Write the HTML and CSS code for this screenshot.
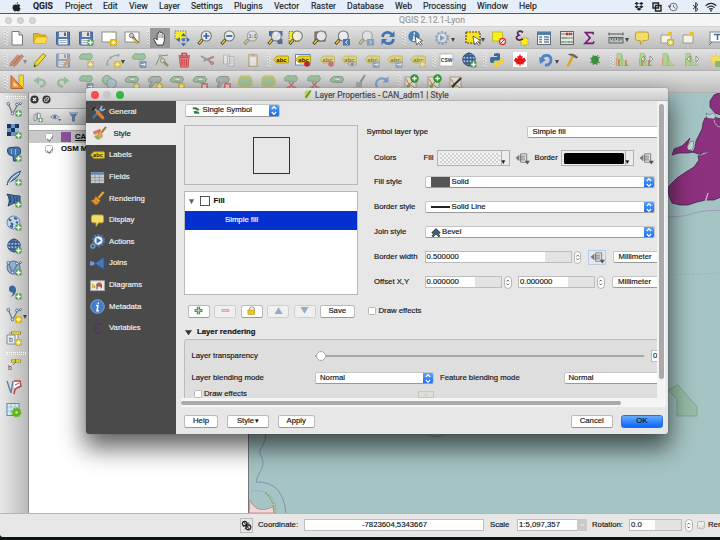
FILE: index.html
```html
<!DOCTYPE html>
<html lang="en">
<head>
<meta charset="utf-8">
<title>QGIS 2.12.1-Lyon</title>
<link rel="stylesheet" href="styles.css">
</head>
<body>
<svg class="defs" width="0" height="0">
  <symbol id="arr" viewBox="0 0 6 16"><path d="M1 8h4L3 12z" fill="#444"/></symbol>
  <symbol id="sep" viewBox="0 0 4 16"><path d="M1 1v15M3 2v14" stroke="#fff" stroke-dasharray="1 2"/><path d="M1.5 2v14" stroke="#999" stroke-width=".6" stroke-dasharray="1 2"/></symbol>
  <symbol id="star" viewBox="0 0 16 16"><rect x="9" y="9" width="7" height="7" rx="1.3" fill="#d9b414"/><path d="M12.5 10v5M10 12.5h5M10.8 10.8l3.4 3.4M14.2 10.8l-3.4 3.4" stroke="#fff9b0" stroke-width=".9"/></symbol>
  <symbol id="plus" viewBox="0 0 16 16"><rect x="9.5" y="9.5" width="6" height="6" rx="1" fill="#4f9a4c"/><path d="M12.5 10.3v4.4M10.3 12.5h4.4" stroke="#fff" stroke-width="1.5"/></symbol>
  <symbol id="blueb" viewBox="0 0 16 16"><rect x="8.5" y="9" width="7" height="7" rx="1" fill="#5b82b4"/><path d="M10 12.5h4M12.5 10.8l1.8 1.7-1.8 1.7" stroke="#fff" fill="none"/></symbol>
  <symbol id="redx" viewBox="0 0 16 16"><rect x="9" y="9" width="7" height="7" rx="1" fill="#db5a58"/><path d="M10.8 10.8l3.4 3.4M14.2 10.8l-3.4 3.4" stroke="#fff" stroke-width="1.2"/></symbol>
  <symbol id="new" viewBox="0 0 16 16"><path d="M3 1.5h7l3.5 3.5v10H3z" fill="#fff" stroke="#777"/><path d="M10 1.5V5h3.5" fill="#ddd" stroke="#777"/></symbol>
  <symbol id="open" viewBox="0 0 16 16"><path d="M1.5 13.500V3.500h5l1 1.500h6v2" fill="#e5b51d" stroke="#c79715"/><path d="M1.500 13.500L4 7h11.500l-2 6.500z" fill="#ffdc45" stroke="#d3a51b" stroke-width=".7"/></symbol>
  <symbol id="save" viewBox="0 0 16 16"><path d="M1.500 2h13v13h-12l-1-1z" fill="#5378b4" stroke="#45648f"/><rect x="4" y="2" width="8" height="5" fill="#e0e0e0"/><rect x="9" y="2.500" width="2" height="3.500" fill="#667"/><rect x="3.500" y="9" width="9" height="5.500" fill="#f2f2f2"/><path d="M4.500 10.500h7M4.500 12.500h7" stroke="#8b93a0" stroke-width=".7"/></symbol>
  <symbol id="pagew" viewBox="0 0 16 16"><rect x="1" y="2" width="14" height="10" fill="#fff" stroke="#777" stroke-width=".8"/></symbol>
  <symbol id="wrench" viewBox="0 0 16 16"><path d="M8 6l6 7.500" stroke="#555" stroke-width="2.600"/><path d="M9 8l5 6" stroke="#e8c62c" stroke-width="1.500"/><circle cx="7.500" cy="5.500" r="2.200" fill="#ccc" stroke="#555" stroke-width=".7"/></symbol>
  <symbol id="hand" viewBox="0 0 16 16"><path d="M5 15L2 9.500q-.3-1.700 1.600-1l1.600 1.600V3.500q.8-1.500 1.700 0V2q1-1.500 1.900 0v1q1-1.400 1.800.2v1q1-1 1.700.4v6L11 15z" fill="#fff" stroke="#222" stroke-width=".8"/><path d="M7 4v4M9 4v4M10.700 5v3" stroke="#444" stroke-width=".6"/></symbol>
  <symbol id="panz" viewBox="0 0 16 16"><path d="M1 1h11v8H1z" fill="#f7ec20" stroke="#555" stroke-width=".7" stroke-dasharray="1.500 1"/><path d="M9.500 3l2.500 3.300H7zM9.500 16.500L7 13.200h5zM2.500 9.700l3.300-2.500v5zM16 9.700l-3.300-2.500v5z" fill="#3767a8"/><path d="M8 8.300h3v3H8z" fill="#4e79b5"/></symbol>
  <symbol id="mag" viewBox="0 0 16 16"><path d="M5.500 9.500L1.500 14" stroke="#333" stroke-width="3"/><path d="M5 10L2 13.500" stroke="#edc82b" stroke-width="1.700"/><circle cx="9.300" cy="6" r="5" fill="#edf1f3" fill-opacity=".85" stroke="#777" stroke-width="1.100"/></symbol>
  <symbol id="full" viewBox="0 0 16 16"><path d="M2 1h5v5H2zM15.500 1h-5v5h5zM15.500 14h-5V9h5z" fill="#446fa5"/><path d="M3 3l10 10M13 3L8 8" stroke="#446fa5" stroke-width="2"/></symbol>
  <symbol id="ysq" viewBox="0 0 16 16"><rect x="1" y="1.500" width="10" height="10" fill="#f9ef1a" stroke="#665f2a" stroke-width=".8" stroke-dasharray="1.500 1"/></symbol>
  <symbol id="ysel" viewBox="0 0 16 16"><rect x="1" y="2" width="14" height="11" fill="#f9e31a" stroke="#333" stroke-width="1.200" stroke-dasharray="1.800 1.200"/></symbol>
  <symbol id="gsq" viewBox="0 0 16 16"><rect x="3" y="2" width="10" height="9" fill="#a79fb7" stroke="#555"/></symbol>
  <symbol id="refresh" viewBox="0 0 16 16"><path d="M2.500 7C3 2 9 1 12 4.500M13.500 9C13 14 7 15 4 11.500" fill="none" stroke="#3f72b5" stroke-width="2.600"/><path d="M14.500 1v6H9zM1.500 15V9H7z" fill="#3f72b5"/></symbol>
  <symbol id="cursor" viewBox="0 0 16 16"><path d="M8 6l1.500 9 2-2.500 2.500 3 1.200-1.200-2.500-2.700 2.800-1z" fill="#fff" stroke="#333" stroke-width=".7"/></symbol>
  <symbol id="info" viewBox="0 0 16 16"><circle cx="7" cy="6.500" r="5.700" fill="#477eb8"/><path d="M7.300 2.500v1.800M7 5.500v4.700M5.500 10.200h3" stroke="#fff" stroke-width="1.500"/></symbol>
  <symbol id="gear" viewBox="0 0 16 16"><circle cx="8" cy="8" r="5.900" fill="none" stroke="#5379ab" stroke-width="2.200" stroke-dasharray="2.300 1.400"/><circle cx="8" cy="8" r="4.900" fill="#eaf0f7" stroke="#5379ab"/><path d="M6 5l5 3-5 3z" fill="#3c6dae"/></symbol>
  <symbol id="eps" viewBox="0 0 16 16"><path d="M9 2.500C5-.5 1.500 3 5 5.200 0 7 3 12 9 9" fill="none" stroke="#5b2267" stroke-width="1.700"/></symbol>
  <symbol id="ysm" viewBox="0 0 16 16"><rect x="7" y="8" width="7" height="7" fill="#f9ef1a" stroke="#8c841b" stroke-width=".7" stroke-dasharray="1.500 1"/></symbol>
  <symbol id="table" viewBox="0 0 16 16"><rect x="1.500" y="2" width="13" height="12.500" fill="#f5f7f8" stroke="#5d6c7b"/><rect x="1.500" y="2" width="13" height="3" fill="#527caa"/><path d="M3 7h3M3 9.500h3M3 12h3M8 7h5M8 9.500h5M8 12h5" stroke="#6c8496" stroke-width="1.300"/></symbol>
  <symbol id="abacus" viewBox="0 0 16 16"><rect x="1.500" y="1.500" width="13" height="13" fill="#e6e6de" stroke="#666"/><path d="M2 4h12M2 8h12M2 12h12" stroke="#555" stroke-width=".7"/><path d="M7 4h6" stroke="#c32b2b" stroke-width="2.500" stroke-dasharray="2 .6"/><path d="M3 8h5M9 12h5M3 12h3" stroke="#7fae8b" stroke-width="2.200" stroke-dasharray="2 .6"/></symbol>
  <symbol id="sigma" viewBox="0 0 16 16"><path d="M12.500 4.500L12 2.700H4.500L9 8l-5 5.400h8l1-2" fill="none" stroke="#761b79" stroke-width="1.700"/></symbol>
  <symbol id="ruler" viewBox="0 0 16 16"><path d="M1 4h14M1 2.500v3M15 2.500v3" stroke="#555"/><rect x="1" y="7.500" width="14" height="5.500" fill="#b5c2bd" stroke="#5a6561"/><path d="M3.500 8v2M6 8v3M8.500 8v2M11 8v3M13 8v2" stroke="#444" stroke-width=".8"/></symbol>
  <symbol id="tip" viewBox="0 0 16 16"><path d="M3.500 2h9q2 0 2 2v4.500q0 2-2 2H9l-2.500 4-.2-4H3.500q-2 0-2-2V4q0-2 2-2z" fill="#f2dd68" stroke="#b79b32" stroke-width=".9"/></symbol>
  <symbol id="book" viewBox="0 0 16 16"><path d="M3 5h10v8H3z" fill="#f5f2e4" stroke="#918b7a" stroke-width=".8"/><path d="M10 2h4v4h-4z" fill="#e9c528"/></symbol>
  <symbol id="tbox" viewBox="0 0 16 16"><rect x="2" y="2" width="15" height="10" fill="#fff" stroke="#7688a0"/><path d="M1 15l3-3" stroke="#666"/><path d="M6 4.500h7M9.500 4.500V10" stroke="#4b658b" stroke-width="1.500"/></symbol>
  <symbol id="pencil" viewBox="0 0 16 16"><path d="M2 15l1-4.500L11 1.500l3 2.300-8.500 9.500z" fill="#f1d92f" stroke="#857313" stroke-width=".8"/><path d="M2 15l.7-2.600 1.500 1.100z" fill="#333"/></symbol>
  <symbol id="pencils" viewBox="0 0 16 16"><path d="M1 14l1-3.500L8.500 3l2.300 1.500L4 12.500zM4.500 14.500l1-3.500L12 2.500l2.500 1.800-7 8.500z" fill="#cb7247" stroke="#8b5136" stroke-width=".7"/></symbol>
  <symbol id="opencil" viewBox="0 0 16 16"><path d="M8.500 15l.5-3 4.500-6 2 1.500-4.500 6z" fill="#df7433" stroke="#a65c2f" stroke-width=".5"/></symbol>
  <symbol id="blob" viewBox="0 0 16 16"><path d="M2 3.500q2-3 6-1.500l5-.5q3 3 0 6-4 1-7-.5Q-.5 8 2 3.500z" fill="#84bd8b" stroke="#5b9164" stroke-width=".8"/></symbol>
  <symbol id="ring" viewBox="0 0 16 16"><path d="M2 4.500q2-3 6-2l5 .2q3 2.500 0 5.500-4 1-7-.2Q-.5 9 2 4.500z" fill="#8cc491" stroke="#5d8363"/><ellipse cx="8.500" cy="5.300" rx="3" ry="1.500" fill="#e8e8df" stroke="#516f54" stroke-width=".6"/></symbol>
  <symbol id="gblob" viewBox="0 0 16 16"><path d="M2 4.500q2-3 6-2l5 .2q3 2.500 0 5.500-2 1-4-.2L4.500 13q-3 1-2-1.500L5 8Q-.5 9 2 4.500z" fill="#9daa9f" stroke="#717e73"/></symbol>
  <symbol id="yblob" viewBox="0 0 16 16"><path d="M2 5q2-4 6-2.500l4-.5q5 4 2 9-3 2-6 .5-5 1-6-1z" fill="#8fc18c" stroke="#c9bc2c" stroke-width="1.600"/></symbol>
  <symbol id="node" viewBox="0 0 16 16"><path d="M2 13C2 7 6 4 13 3" fill="none" stroke="#6f806f"/><path d="M1 11.500h2.500V14H1zM4.500 4.500H7V7H4.500zM12 2h2.500v2.500H12z" fill="#8da48d"/></symbol>
  <symbol id="ntool" viewBox="0 0 16 16"><path d="M2 13L6 4l8-1M6 4l7 10" fill="none" stroke="#657460"/><path d="M4.500 2.500h3v3h-3z" fill="#889a88"/><path d="M8 8l6 6" stroke="#7a7a55" stroke-width="2.500"/><circle cx="8.500" cy="8.500" r="2.200" fill="#cfd0a8" stroke="#777"/></symbol>
  <symbol id="trash" viewBox="0 0 16 16"><path d="M3.500 5.500h9.500L12 15H4.500z" fill="#e48383" stroke="#c94a4a"/><path d="M2.500 4h11.500M6 3.500V1.500h4.500v2" fill="none" stroke="#c94a4a" stroke-width="1.500"/><path d="M6 7v6.500M8.200 7v6.500M10.500 7v6.500" stroke="#c33f3f"/></symbol>
  <symbol id="cut" viewBox="0 0 16 16"><path d="M2 4l10 6M15 4.500L4.500 9" stroke="#7c7c7c" stroke-width="1.500"/><path d="M11 10q3-1 3.500 1.500-2 2-3.500-1.500M10 7.500q2-3 4.500-1.500" fill="none" stroke="#c45050" stroke-width="1.400"/></symbol>
  <symbol id="copy" viewBox="0 0 16 16"><path d="M2.500 3h6v9h-6zM6.500 4.500h6.500V14H6.500z" fill="#f4f4f4" stroke="#999"/><path d="M8 7h3.500M8 9h3.500M8 11h3.500" stroke="#999" stroke-width=".8"/></symbol>
  <symbol id="paste" viewBox="0 0 16 16"><rect x="3.500" y="2.500" width="9" height="12" fill="#d8b371" stroke="#a88b5b"/><rect x="5" y="5" width="6" height="8.500" fill="#f6f6f6"/><rect x="6" y="1.500" width="4" height="2.500" fill="#888"/></symbol>
  <symbol id="abc" viewBox="0 0 16 16"><path d="M4 4h10.500q1 0 1 1v5q0 1-1 1H4L.7 7.500z" fill="#edd417" stroke="#a4911a" stroke-width=".8"/><text x="3.300" y="9.500" font-family="Liberation Sans" font-weight="bold" font-size="6" fill="#222">abc</text></symbol>
  <symbol id="frame" viewBox="0 0 16 16"><rect x=".5" y="2.500" width="14.500" height="10.500" fill="#fff" stroke="#5a8ac6"/></symbol>
  <symbol id="reddot" viewBox="0 0 16 16"><circle cx="12" cy="12" r="2.800" fill="#c32229"/></symbol>
  <symbol id="eye" viewBox="0 0 16 16"><path d="M7 12q4-4.500 8.500 0-4 4-8.500 0z" fill="#e5e5e5" stroke="#666"/><circle cx="11.200" cy="12" r="1.500" fill="#445"/></symbol>
  <symbol id="csw" viewBox="0 0 16 16"><rect x="2" y="2" width="13" height="12" fill="#fff" stroke="#aaa" stroke-width=".7"/><text x="2.800" y="9.600" font-family="Liberation Sans" font-weight="bold" font-size="5" fill="#333">CSW</text></symbol>
  <symbol id="globe" viewBox="0 0 16 16"><circle cx="8" cy="7.500" r="6.300" fill="#a9bdd5" stroke="#2f5585"/><path d="M8 1v13M2 7.500h12M3 4h10M3 11h10" stroke="#2f5585" stroke-width="1.300"/><ellipse cx="8" cy="7.500" rx="3.300" ry="6.300" fill="none" stroke="#2f5585" stroke-width="1.200"/></symbol>
  <symbol id="python" viewBox="0 0 16 16"><path d="M5 4V2q3-2 6 0v5q0 1.500-2 1.500H6Q4.500 8.500 4.500 11H3Q0 11 1.500 5H8V4z" fill="#386e9e"/><path d="M11 12v2q-3 2-6 0V10.500Q5 9 7 9h3q1.800 0 1.800-3.500H13q3 1 1.700 6H8V12z" fill="#f1cf3e"/></symbol>
  <symbol id="canada" viewBox="0 0 16 16"><rect x="1" y="0" width="14" height="15" fill="#fff"/><path d="M8 2l1.200 2.500 1.500-.8-.4 3L13 5.500v2l1.500.6-3 2.900.2 1.500-3.200-.3V14h-1v-1.800l-3.200.3.200-1.500-3-2.900L3 7.500v-2l2.700 1.200-.4-3 1.500.8z" fill="#e6131b"/></symbol>
  <symbol id="undo2" viewBox="0 0 16 16"><path d="M4 7C5 2 13 2 13 8c0 4-3 5.500-6 5" fill="none" stroke="#4a83cd" stroke-width="2.800"/><path d="M1 5l1 7 6-4z" fill="#4a83cd"/></symbol>
  <symbol id="hammer" viewBox="0 0 16 16"><path d="M9 4L3.500 14.500" stroke="#d9a821" stroke-width="2.600"/><path d="M4.500 2.500q5-2 9.500 3l-2 .5-3-2z" fill="#666" stroke="#444" stroke-width=".5"/></symbol>
  <symbol id="bug" viewBox="0 0 16 16"><path d="M3 6l10 5M3 11l10-6M6 3l4 10M11 3L6 13" stroke="#3f7c3f" stroke-width=".9"/><ellipse cx="8" cy="8" rx="3.800" ry="4.200" fill="#3d9040"/></symbol>
  <symbol id="hist" viewBox="0 0 16 16"><path d="M2 1.500h4.500v12H2zM7 13.500V3q1 8 7 10.500z" fill="#b0d68e" stroke="#93b97a" stroke-width=".6"/><path d="M1.500 6v8" stroke="#db9988"/></symbol>
  <symbol id="redbar" viewBox="0 0 16 16"><path d="M4 7v7M11 8v6" stroke="#d95b4b" stroke-width="1.200"/></symbol>
  <symbol id="larr" viewBox="0 0 16 16"><path d="M3 7l3-3v6zM15 7l-3-3v6z" fill="#eee" stroke="#777" stroke-width=".7"/></symbol>
  <symbol id="sun" viewBox="0 0 16 16"><path d="M8 1v14M1 8h14M3 3l10 10M13 3L3 13" stroke="#e6d153" stroke-width="1.300"/><circle cx="8" cy="8" r="4.200" fill="#f0dc60"/><rect x="7" y="9" width="8" height="6" fill="#8fb56a"/></symbol>
  <symbol id="setsq" viewBox="0 0 16 16"><rect x="10" y="1" width="4.500" height="12" fill="#f1d92f" stroke="#a08c20" stroke-width=".6"/><path d="M2 1.500V14.500H14z" fill="#ee8d35" stroke="#c0601f"/><path d="M4.500 7.500v4.700H9z" fill="#e0e0e0"/></symbol>
  <symbol id="undo" viewBox="0 0 16 16"><path d="M4 6.500q8-2.500 9 2-.5 4-5 4" fill="none" stroke="#63a56b" stroke-width="2.300"/><path d="M1.500 6.500L7 2.500v8z" fill="#63a56b"/></symbol>
  <symbol id="simp" viewBox="0 0 16 16"><circle cx="6" cy="6" r="4.500" fill="#92c598" stroke="#5c8f67"/><path d="M10 4l5 3v5l-5 3-4-3V7z" fill="#a6c4da" fill-opacity=".8" stroke="#6889a2"/></symbol>
  <symbol id="sciss" viewBox="0 0 16 16"><path d="M6 8l5 6M11 8l-5 6" stroke="#c25151" stroke-width="1.300"/><circle cx="5.500" cy="14" r="1.400" fill="none" stroke="#c25151"/><circle cx="11.500" cy="14" r="1.400" fill="none" stroke="#c25151"/></symbol>
  <symbol id="brushg" viewBox="0 0 16 16"><path d="M14 1L9 9" stroke="#777" stroke-width="2"/><path d="M5 8h6v5H5z" fill="#999"/><path d="M2 14.500h10" stroke="#aaa" stroke-width="2"/></symbol>
  <symbol id="rot" viewBox="0 0 16 16"><path d="M3 13C0 8 5 2 12 5.500" fill="none" stroke="#5b8cd2" stroke-width="2"/><path d="M14.500 2v6.500H8.500z" fill="#5b8cd2"/></symbol>
  <symbol id="grass" viewBox="0 0 16 16"><rect x="2" y="3" width="11" height="12" fill="#e9e2d0" stroke="#938571" stroke-width=".7"/><path d="M3 5l3 5 6 4M3 12l4-2 5-5" stroke="#b67960" fill="none"/><path d="M4 13l3-1" stroke="#6a3" stroke-width="2"/></symbol>
  <symbol id="gplus" viewBox="0 0 16 16"><circle cx="11.500" cy="4.500" r="4.200" fill="#2b9d2b"/><path d="M11.500 2.200v4.600M9.200 4.500h4.600" stroke="#fff" stroke-width="1.300"/></symbol>
  <symbol id="vee" viewBox="0 0 16 16"><path d="M2.500 3L6.500 13 12 3" fill="none" stroke="#6a7c8b" stroke-width="1.300"/><path d="M11 3.500h4" stroke="#6a7c8b"/><g fill="#dfe8f0" stroke="#3f5c7d" stroke-width=".8"><circle cx="2.300" cy="2.800" r="1.400"/><circle cx="6.500" cy="12.500" r="1.400"/><circle cx="11" cy="3.500" r="1.400"/><circle cx="14.500" cy="2.500" r="1"/></g></symbol>
  <symbol id="raster" viewBox="0 0 16 16"><rect x="1" y="1" width="12" height="12" fill="#6794c4"/><path d="M1 1h4v4H1zM9 1h4v4H9zM5 5h4v4H5zM1 9h4v4H1z" fill="#19365f"/><path d="M9 5h4v4H9z" fill="#9bb8d6"/></symbol>
  <symbol id="pg" viewBox="0 0 16 16"><path d="M1.500 5Q1 1 6 1.500q8-1.500 8.500 2Q15 9 12 9l-1 1-1 5H7.500L7 10 4 9Q2 9 1.500 5z" fill="#4474a9" stroke="#24466f"/><path d="M5.500 3v5M9.500 3v6" stroke="#a5c0da" stroke-width=".8"/></symbol>
  <symbol id="feather" viewBox="0 0 16 16"><path d="M1 15Q2 6 14.500 1 13 8 4 12z" fill="#6d97c5" stroke="#32577f"/><path d="M2 14Q6 7 13 3" stroke="#e7f0fa" fill="none"/></symbol>
  <symbol id="shell" viewBox="0 0 16 16"><path d="M1 2q8 2 13 2v7q-7-1-12 3 3-6-1-12z" fill="#4474a9" stroke="#1f3f6a"/><path d="M4 4q2 4 0 7M7.500 4q2 4 0 7M11 5v6" stroke="#1f3f6a" fill="none"/></symbol>
  <symbol id="dots" viewBox="0 0 16 16"><circle cx="7.500" cy="7.500" r="6.500" fill="#c6d6e5" stroke="#6687ab"/><path d="M3 4l2 2M8 3l3 1M10 7l2 1M5 8l2 2M4 11l3 1" stroke="#37659b" stroke-width="2.200"/></symbol>
  <symbol id="disc" viewBox="0 0 16 16"><circle cx="7.500" cy="7.500" r="6.500" fill="#8fafd0" stroke="#4a70a0"/></symbol>
  <symbol id="comma" viewBox="0 0 16 16"><path d="M3 5q0-3.500 3.500-3.500Q10 2 10 6q0 5-5.500 7Q7.500 10 6.500 8.500 3 8.500 3 5z" fill="#3a669b"/></symbol>
  <symbol id="vbook" viewBox="0 0 16 16"><path d="M1 5h8v9H1zM3 3h9v9" fill="#ededed" stroke="#8a8a8a"/><text x="3" y="12" font-family="Liberation Sans" font-size="7" fill="#446">b</text><path d="M5 3h10" stroke="#8e8921" stroke-width="3"/><path d="M6 3h8" stroke="#eee12c" stroke-width="1.600"/></symbol>
  <symbol id="blab" viewBox="0 0 16 16"><text x="2" y="14" font-family="Liberation Sans" font-size="7" fill="#446">b</text><path d="M5 5h10" stroke="#8e8921" stroke-width="3"/><path d="M5.700 5h8.600" stroke="#eee12c" stroke-width="1.600"/><path d="M7 9l2-2M9.500 3v4" stroke="#777"/></symbol>
  <symbol id="vp" viewBox="0 0 16 16"><path d="M1 2l4 12M7 2l-2 12" stroke="#5d7ea5" stroke-width="1.400"/><path d="M8 2h6l1 5-6 3-1 5" fill="#fff" stroke="#ba4146" stroke-width="1.500"/><path d="M9 6l4-2" stroke="#ba4146"/></symbol>
  <symbol id="tgear" viewBox="0 0 16 16"><rect x="1" y="1.500" width="12" height="12" fill="#d8ebf7" stroke="#578aa8"/><path d="M1 5h12M1 9h12M5 2v11M9 2v11" stroke="#94b9ce" stroke-width=".8"/><circle cx="10.500" cy="10.500" r="4" fill="#61b51f" stroke="#61b51f" stroke-width="1.800" stroke-dasharray="2 1"/><circle cx="10.500" cy="10.500" r="1.200" fill="#cdeab0"/></symbol>
  <symbol id="funnel" viewBox="0 0 16 16"><path d="M2 2h12L9.500 8v6H6.500V8z" fill="#5b82b4" stroke="#34557f" stroke-width=".7"/><path d="M2 2h12v1.500H2z" fill="#dcb92d"/></symbol>
  <symbol id="grp" viewBox="0 0 16 16"><path d="M3 13V5l3-2v10zM8 11V2l4 1v8z" fill="#eee" stroke="#667"/></symbol>
  <symbol id="tools" viewBox="0 0 16 16"><path d="M13 3L3 14" stroke="#337bc3" stroke-width="2.500"/><path d="M13 1l-2 3 2 2 3-2" fill="none" stroke="#bbb" stroke-width="1.500"/><path d="M5 4l3 3" stroke="#999" stroke-width="2"/><path d="M8 7.500l5.500 6" stroke="#e47d2b" stroke-width="3.500" stroke-linecap="round"/><path d="M1 5q3-5 7-4L3 7z" fill="#222" stroke="#888" stroke-width=".5"/></symbol>
  <symbol id="stylei" viewBox="0 0 16 16"><path d="M1 6l8-3 2 9-6 2z" fill="#eac26a"/><path d="M1 6l8-3v3L2 9z" fill="#e46c6c"/><path d="M2 11l9-2v3l-6 2z" fill="#7ebc61"/><path d="M15 1l-5 6" stroke="#a8743c" stroke-width="2.200"/><path d="M7 6l4 3q-1 5-5 5Q7 10 7 6z" fill="#d7ae6c" stroke="#9d7844" stroke-width=".6"/></symbol>
  <symbol id="fields" viewBox="0 0 16 16"><rect x="1" y="2.500" width="14" height="11.500" fill="#c5cccd"/><path d="M1 2.500h14V5H1z" fill="#6487ae"/><path d="M1 8h14M1 11h14M5.500 5v9M10 5v9" stroke="#8b9494" stroke-width=".8"/></symbol>
  <symbol id="brush" viewBox="0 0 16 16"><path d="M14.500 1L9 7.500" stroke="#e9a438" stroke-width="2.400"/><path d="M6 5.500l5 4.500q-2 4-5 5L1 10q4 0 5-4.500z" fill="#e39a2d" stroke="#a66515" stroke-width=".7"/><path d="M3.500 11l2 2M5.500 9l2 3" stroke="#a66515" stroke-width=".7"/></symbol>
  <symbol id="join" viewBox="0 0 16 16"><path d="M5 8L15 1v13.500z" fill="#477abb" stroke="#2b5084"/><path d="M0 5.500q5 0 5 2.500t-5 2z" fill="#6e9cd4"/></symbol>
  <symbol id="diag" viewBox="0 0 16 16"><rect x=".7" y="3" width="14.600" height="10.500" fill="#f0eee5" stroke="#aaa"/><path d="M3 11V6M5 11V8" stroke="#cb9f32" stroke-width="1.500"/><circle cx="10" cy="7" r="2.500" fill="#d45347"/><path d="M7.500 6v6M12 7v4" stroke="#333"/></symbol>
  <symbol id="metai" viewBox="0 0 16 16"><circle cx="8" cy="8" r="7.300" fill="#447dcc" stroke="#9dc1ed" stroke-width=".7"/><path d="M9 3.500l-.3 1.700M6.500 7h2l-1 5.500h2" fill="none" stroke="#fff" stroke-width="1.600"/></symbol>
  <symbol id="feps" viewBox="0 0 16 16"><path d="M12 4C8 1 3.500 4.500 7.500 7.700 2 9.500 5 14.500 12 12" fill="none" stroke="#55355f" stroke-width="1.800"/></symbol>
  <symbol id="dd" viewBox="0 0 16 14"><path d="M4.500 3L.5 6.500l4 3.500z" fill="#777"/><path d="M6 2h6.500v9H6z" fill="#eee" stroke="#777"/><path d="M5 4.500h6M5 6.500h6M5 8.500h6" stroke="#666" stroke-width=".9"/><path d="M10.500 9.500H16L13.200 13.500z" fill="#555"/></symbol>
  <symbol id="ud" viewBox="1.500 1 7 10.500"><path d="M3.200 5L5 3.200 6.800 5M3.200 7.500L5 9.300l1.800-1.800" fill="none" stroke="currentColor"/></symbol>
  <symbol id="single" viewBox="0 0 10 10"><path d="M1 1h4l4 2v2H6L4 3.500H1zM2 5.500h3L9 7v2H3z" fill="#2d8446"/></symbol>
</svg>

<header class="menubar">
  <svg class="apple" viewBox="0 0 9 10"><path d="M6.200 0q.1 1.500-1.600 2.100Q4.600.6 6.200 0zM4.500 2.800Q6.800 1.600 8.300 3.400 6.500 4.900 8.600 6.600 7.700 9.500 6.200 9.500L4.600 9 3 9.500Q1 9 .5 6 .5 2.300 3.200 2.400z" fill="#222"/></svg>
  <b>QGIS</b><span>Project</span><span>Edit</span><span>View</span><span>Layer</span><span>Settings</span><span>Plugins</span><span>Vector</span><span>Raster</span><span>Database</span><span>Web</span><span>Processing</span><span>Window</span><span>Help</span>
  <svg viewBox="0 0 10 10"><path d="M2.700 0L5 1.500 2.700 3 .4 1.500zM7.300 0l2.300 1.500L7.300 3 5 1.500zM2.700 3.200L5 4.700 2.700 6.200.4 4.700zM7.300 3.200l2.300 1.500-2.300 1.500L5 4.700zM5 5.500l2.500 1.600L5 8.700 2.500 7.100z" fill="#222"/></svg>
  <svg viewBox="0 0 10 10"><path d="M1 1h5.500v5H1zM3.500 3.500H9V9H3.500z" fill="none" stroke="#222" stroke-width="1.400"/></svg>
  <svg viewBox="0 0 11 10"><circle cx="6" cy="5" r="4.200" fill="none" stroke="#555" stroke-width=".9"/><path d="M6 2.500V5l2 1.300M.3 3.800h2.800L1.700 5.700z" fill="none" stroke="#444" stroke-width=".8"/></svg>
  <svg viewBox="0 0 10 10"><path d="M2 3l5 4.300L4.700 9.500V.5L7 2.700 2 7" fill="none" stroke="#333"/></svg>
  <svg class="wifi" viewBox="0 0 12 10"><path d="M.7 3.700q5.300-4.500 10.600 0M2.400 5.600q3.600-3 7.200 0M4.200 7.300q1.800-1.400 3.600 0" fill="none" stroke="#222" stroke-width="1.200"/><circle cx="6" cy="8.700" r=".9" fill="#222"/></svg>
</header>

<div class="wintitle"><div class="dots"><i></i><i></i><i></i></div><span>QGIS 2.12.1-Lyon</span></div>

<div class="tb tb1">
  <svg class="s"><use href="#sep"/></svg>
  <svg><use href="#new"/></svg>
  <svg><use href="#open"/></svg>
  <svg><use href="#save"/></svg>
  <svg><use href="#save"/><use href="#plus"/></svg>
  <svg><use href="#pagew"/><use href="#star"/></svg>
  <svg><use href="#pagew"/><use href="#wrench"/></svg>
  <svg class="s"><use href="#sep"/></svg>
  <svg class="pressed"><use href="#hand"/></svg>
  <svg><use href="#panz"/></svg>
  <svg viewBox="0 0 16 16"><use href="#mag"/><path d="M9.300 3v6M6.300 6h6" stroke="#315f9a" stroke-width="1.700"/></svg>
  <svg viewBox="0 0 16 16"><use href="#mag"/><path d="M6.300 6h6" stroke="#315f9a" stroke-width="1.700"/></svg>
  <svg viewBox="0 0 16 16" class="dim"><use href="#mag"/><text x="5.500" y="8.200" font-size="5.500" font-weight="bold" font-family="Liberation Sans">1:1</text></svg>
  <svg><use href="#full"/><use href="#mag"/></svg>
  <svg><use href="#ysq"/><use href="#mag"/></svg>
  <svg><use href="#gsq"/><use href="#mag"/></svg>
  <svg viewBox="0 0 16 16"><use href="#mag"/><rect x="9" y="9" width="7" height="6.500" fill="#4774ad"/><path d="M13.500 10.500l-2 1.800 2 1.700" stroke="#fff" fill="none"/></svg>
  <svg viewBox="0 0 16 16" class="dim"><use href="#mag"/><rect x="9" y="9" width="7" height="6.500" fill="#4774ad"/><path d="M11.500 10.500l2 1.800-2 1.700" stroke="#fff" fill="none"/></svg>
  <svg><use href="#refresh"/></svg>
  <svg class="s"><use href="#sep"/></svg>
  <svg><use href="#info"/><use href="#cursor"/></svg>
  <svg class="dim"><use href="#gear"/></svg>
  <svg class="a"><use href="#arr"/></svg>
  <svg><use href="#ysel"/><use href="#cursor"/></svg>
  <svg class="a"><use href="#arr"/></svg>
  <svg viewBox="0 0 16 16"><rect x="1.500" y="2" width="10" height="9" fill="#f9ef1a" stroke="#b3a824" stroke-width=".7"/><circle cx="11.500" cy="11.500" r="3" fill="#fff" stroke="#d33" stroke-width="1.300"/><path d="M9.500 13.500l4-4" stroke="#d33"/></svg>
  <svg><use href="#ysm"/><use href="#eps"/></svg>
  <svg><use href="#table"/></svg>
  <svg><use href="#abacus"/></svg>
  <svg><use href="#sigma"/></svg>
  <svg><use href="#ruler"/></svg>
  <svg class="a"><use href="#arr"/></svg>
  <svg><use href="#tip"/></svg>
  <svg><use href="#book"/><use href="#star"/></svg>
  <svg><use href="#book"/></svg>
  <svg><use href="#tbox"/></svg>
</div>

<div class="tb tb2">
  <svg class="s"><use href="#sep"/></svg>
  <svg class="dim2"><use href="#pencils"/></svg>
  <svg class="a dim"><use href="#arr"/></svg>
  <svg><use href="#pencil"/></svg>
  <svg class="dim"><use href="#save"/><use href="#opencil"/></svg>
  <svg class="dim2"><use href="#blob"/><use href="#star"/></svg>
  <svg class="dim2"><use href="#node"/><use href="#star"/></svg>
  <svg class="a"><use href="#arr"/></svg>
  <svg class="dim2"><use href="#blob"/><use href="#blueb"/></svg>
  <svg class="dim2"><use href="#ntool"/></svg>
  <svg><use href="#trash"/></svg>
  <svg class="dim2"><use href="#cut"/></svg>
  <svg class="dim"><use href="#copy"/></svg>
  <svg class="dim"><use href="#paste"/></svg>
  <svg class="s"><use href="#sep"/></svg>
  <svg><use href="#abc"/></svg>
  <svg><use href="#frame"/><use href="#abc"/><use href="#reddot"/></svg>
  <svg class="dim"><use href="#abc"/><use href="#reddot"/></svg>
  <svg class="dim"><use href="#abc"/><use href="#eye"/></svg>
  <svg class="dim"><use href="#abc"/><use href="#blueb"/></svg>
  <svg class="dim"><use href="#abc"/><use href="#blueb"/></svg>
  <svg class="dim"><use href="#abc"/><use href="#star"/></svg>
  <svg class="s"><use href="#sep"/></svg>
  <svg><use href="#csw"/></svg>
  <svg><use href="#globe"/><use href="#plus"/></svg>
  <svg class="s"><use href="#sep"/></svg>
  <svg><use href="#python"/></svg>
  <svg><use href="#canada"/></svg>
  <svg><use href="#undo2"/></svg>
  <svg class="a"><use href="#arr"/></svg>
  <svg><use href="#hammer"/></svg>
  <svg><use href="#bug"/></svg>
  <svg class="s"><use href="#sep"/></svg>
  <svg><use href="#hist"/><use href="#redbar"/></svg>
  <svg><use href="#hist"/><use href="#redbar"/><use href="#larr"/></svg>
  <svg><use href="#hist"/></svg>
  <svg><use href="#hist"/><use href="#larr"/></svg>
  <svg><use href="#sun"/></svg>
</div>

<div class="tb tb3">
  <svg class="s"><use href="#sep"/></svg>
  <svg><use href="#setsq"/></svg>
  <svg class="dim"><use href="#undo"/></svg>
  <svg class="dim flip"><use href="#undo"/></svg>
  <svg class="dim2"><use href="#blob"/><use href="#blueb"/></svg>
  <svg class="dim2"><use href="#simp"/></svg>
  <svg class="dim2"><use href="#ring"/><use href="#star"/></svg>
  <svg class="dim2"><use href="#gblob"/><use href="#star"/></svg>
  <svg class="dim2"><use href="#ring"/><use href="#star"/></svg>
  <svg class="dim2"><use href="#ring"/><use href="#redx"/></svg>
  <svg class="dim2"><use href="#gblob"/><use href="#redx"/></svg>
  <svg class="dim2"><use href="#yblob"/></svg>
  <svg class="dim2"><use href="#yblob"/></svg>
  <svg class="dim2"><use href="#blob"/><use href="#sciss"/></svg>
  <svg class="dim2"><use href="#blob"/><use href="#sciss"/></svg>
  <svg class="dim2"><use href="#ring"/></svg>
  <svg class="dim2"><use href="#brushg"/></svg>
  <svg class="dim2"><use href="#rot"/></svg>
  <svg class="s"><use href="#sep"/></svg>
  <svg><use href="#grass"/><use href="#gplus"/></svg>
  <svg><use href="#grass"/><use href="#gplus"/></svg>
  <svg viewBox="0 0 16 16"><use href="#grass"/><path d="M4 13l9-9" stroke="#333" stroke-width="2"/></svg>
</div>

<main class="work">
  <nav class="side">
    <div class="hs"></div>
    <svg><use href="#vee"/><use href="#plus"/></svg>
    <svg><use href="#raster"/><use href="#plus"/></svg>
    <svg><use href="#pg"/><use href="#plus"/></svg>
    <svg><use href="#feather"/><use href="#plus"/></svg>
    <svg><use href="#shell"/><use href="#plus"/></svg>
    <svg><use href="#dots"/><use href="#plus"/></svg>
    <svg><use href="#globe"/><use href="#plus"/></svg>
    <svg><use href="#disc"/><use href="#vee"/><use href="#plus"/></svg>
    <svg><use href="#comma"/><use href="#plus"/></svg>
    <div class="pair"><svg><use href="#vee"/><use href="#star"/></svg><svg class="a"><use href="#arr"/></svg></div>
    <svg><use href="#vbook"/><use href="#star"/></svg>
    <div class="hs"></div>
    <svg><use href="#blab"/></svg>
    <svg><use href="#vp"/></svg>
    <svg><use href="#tgear"/></svg>
  </nav>

  <section class="layers">
    <div class="lhead">
      <svg viewBox="0 0 10 10"><circle cx="5" cy="5" r="4.500" fill="#333"/><path d="M3.200 3.200l3.600 3.600M6.800 3.200L3.200 6.800" stroke="#fff" stroke-width="1.200"/></svg>
      <svg viewBox="0 0 10 10"><circle cx="5" cy="5" r="4.500" fill="#333"/><path d="M2.800 4.500h3v2.700h-3zM4.500 4.300V2.800h2.800v2.800H6" fill="none" stroke="#ddd" stroke-width=".8"/></svg>
    </div>
    <div class="ltools">
      <svg viewBox="0 0 16 16"><use href="#grp"/><use href="#plus"/></svg>
      <svg viewBox="0 0 16 16"><path d="M1 8q6-6 12 0-6 5-12 0z" fill="#dde3ea" stroke="#668"/><circle cx="7" cy="7.800" r="2.300" fill="#4773a8"/><path d="M12 11h4l-2 3z" fill="#555"/></svg>
      <svg viewBox="0 0 16 16"><use href="#funnel"/></svg>
    </div>
    <div class="lrow sel"><span class="cb on"></span><i class="sw"></i><b><u>CAN_adm1</u></b></div>
    <div class="lrow"><span class="cb on"></span><b>OSM Mapnik</b></div>
  </section>

  <section class="map">
    <svg viewBox="249 93 471 420">
      <path d="M721 92L714 95 710 101 710 107 715 113 721 115z" fill="#8c317d" stroke="#44264d" stroke-width=".8"/>
      <path d="M721 119L713 117 705 118 703 123 702 129 699 135 696 141 695 148 693 152 698 154 703 153 698 156 699 160 694 167 686 172 677 178 668 187 669 196 672 203 680 205 688 205 697 202 706 200 714 200 721 197z" fill="#8c317d" stroke="#44264d" stroke-width=".8"/>
      <path d="M672 155l2-6 8-3 8-8-3 8 1 4 6 2-6 1-9 0z" fill="#8c317d" stroke="#44264d" stroke-width=".7"/>
      <path d="M687 147l3-5 3-1 1 5-2 4-4 0z" fill="#c7d3d6" stroke="#44264d" stroke-width=".4"/>
      <path d="M706 113l3 2 4-2 3 3-2 3-7-1zM699 156l4-3 6-1" fill="#b8cfd2" stroke="#6a4c70" stroke-width=".5"/>
      <path d="M714 120q1 6 6 7M705 201l3-8-2 8" fill="none" stroke="#c9bdd2" stroke-width=".8"/>
      <path d="M668 217q15 0 25-3.500t27-3" fill="none" stroke="#a393bb" stroke-width=".9"/>
      <path d="M708 92l-8 25M672 213l5-12M668 275l52-2" fill="none" stroke="#8faac0" stroke-width=".6" stroke-dasharray="2 2"/>
      <path d="M668 390l10-5 19 22v9h-20v-17z" fill="#96bda8" stroke="#7ca78c"/>
      <circle cx="436" cy="425" r="12" fill="none" stroke="#7c9696"/>
      <path d="M265 433q2 6-2 12-4 6-3 9 6 9 0 18-3 5-4 10 27-1 30 31" fill="none" stroke="#8189ae" stroke-width=".9"/>
      <path d="M251 491q25-3 25 22" fill="none" stroke="#8b9cbf" stroke-width=".8" stroke-dasharray="2 1.500"/>
      <path d="M265 493q9 6 9 20" fill="none" stroke="#88a75c" stroke-width="1.400" stroke-dasharray="2 1"/>
      <path d="M250 500q5 12 17 9l6-2 1 6h-25z" fill="#eed9d6" stroke="#bc7379" stroke-width=".7"/>
    </svg>
  </section>
</main>

<footer class="status">
  <div class="sicon"><svg viewBox="0 0 12 12"><circle cx="4" cy="4" r="2.500" fill="none" stroke="#222" stroke-width="1.300"/><circle cx="8" cy="8" r="2.700" fill="none" stroke="#222" stroke-width="1.300"/><path d="M2 7l7-4M4 10l6-5M3 2l6 8" stroke="#222"/></svg></div>
  <span class="c1">Coordinate:</span><div class="in coord">-7823604,5343667</div>
  <span class="c2">Scale</span><div class="in scale">1:5,097,357</div><div class="drop"><svg viewBox="0 0 10 12"><path d="M3 5l2 2 2-2" fill="none" stroke="#eee"/></svg></div>
  <span class="c3">Rotation:</span><div class="in half rotv">0.0</div><svg class="spin"><use href="#ud"/></svg>
  <span class="cb on faint c4"></span><span class="c5">Render</span>
</footer>
<div class="desk"></div>

<div class="dialog">
  <div class="dtitle">
    <div class="lights"><i class="r"></i><i class="g"></i><i class="gr"></i></div>
    <svg viewBox="0 0 10 10"><path d="M1 1l4-1 4 1-3 8-5 1z" fill="#b5d83d"/><path d="M8.500 0L2 9" stroke="#557a20" stroke-width="1.600"/></svg>
    <span>Layer Properties - CAN_adm1 | Style</span>
  </div>
  <div class="dbody">
    <ul class="tabs">
      <li><svg><use href="#tools"/></svg>General</li>
      <li class="cur"><svg><use href="#stylei"/></svg>Style</li>
      <li><svg><use href="#abc"/></svg>Labels</li>
      <li><svg><use href="#fields"/></svg>Fields</li>
      <li><svg><use href="#brush"/></svg>Rendering</li>
      <li><svg><use href="#tip"/></svg>Display</li>
      <li><svg viewBox="0 0 16 16"><use href="#gear" x="1" y="-1"/><circle cx="3" cy="13" r="2" fill="none" stroke="#7898c0" stroke-width="1.600"/></svg>Actions</li>
      <li><svg><use href="#join"/></svg>Joins</li>
      <li><svg><use href="#diag"/></svg>Diagrams</li>
      <li><svg><use href="#metai"/></svg>Metadata</li>
      <li><svg><use href="#feps"/></svg>Variables</li>
    </ul>
    <div class="pane">
      <div class="scroll">
        <div class="content">
          <div class="combo renderer"><svg class="ic"><use href="#single"/></svg><span>Single Symbol</span><svg class="cap"><use href="#ud"/></svg></div>
          <div class="cols">
            <div class="left">
              <div class="preview"><i></i></div>
              <div class="tree">
                <div class="root"><svg viewBox="0 0 8 8"><path d="M1 1.500h6L4 7z" fill="#666"/></svg><i></i><b>Fill</b></div>
                <div class="leaf"><i></i>Simple fill</div>
              </div>
              <div class="tools">
                <div class="btn"><svg viewBox="0 0 10 10"><path d="M5 .7v8.600M.7 5h8.600" stroke="#3d7a40" stroke-width="3.600"/><path d="M5 1.500v7M1.500 5h7" stroke="#a9d6a3" stroke-width="1.600"/></svg></div>
                <div class="btn off"><svg viewBox="0 0 10 10"><path d="M.7 5h8.600" stroke="#e59a9d" stroke-width="3.200"/><path d="M1.500 5h7" stroke="#f7caca" stroke-width="1.200"/></svg></div>
                <div class="btn"><svg viewBox="0 0 10 10"><path d="M3 5V2.500Q5.500-.8 8 2.500V5" fill="none" stroke="#999" stroke-width="1.200"/><rect x="1" y="4.500" width="7.500" height="5" fill="#efc81c" stroke="#a98b16" stroke-width=".6"/></svg></div>
                <div class="btn off"><svg viewBox="0 0 10 10"><path d="M5 1.500L9.500 9H.5z" fill="#94aacb"/></svg></div>
                <div class="btn off"><svg viewBox="0 0 10 10"><path d="M5 8.500L9.500 1H.5z" fill="#94aacb"/></svg></div>
                <div class="btn save">Save</div>
              </div>
            </div>
            <div class="form">
              <div class="row r0"><span class="lab wide">Symbol layer type</span><div class="combo cut">Simple fill</div></div>
              <div class="row r1"><span class="lab">Colors</span><span class="fl">Fill</span>
                <div class="color"><svg class="swt" viewBox="0 0 60 11"><defs><pattern id="checks" width="4" height="4" patternUnits="userSpaceOnUse"><rect width="4" height="4" fill="#f6f6f6"/><path d="M0 0h2v2H0zM2 2h2v2H2z" fill="#d0d0d0"/></pattern></defs><rect width="60" height="11" fill="url(#checks)"/></svg><em>▾</em></div><svg class="dd"><use href="#dd"/></svg>
                <span class="bl">Border</span><div class="color"><div class="swt blk"></div><em>▾</em></div><svg class="dd"><use href="#dd"/></svg></div>
              <div class="row r2"><span class="lab">Fill style</span><div class="combo long"><i class="solid"></i><span>Solid</span><svg class="cap"><use href="#ud"/></svg></div></div>
              <div class="row r3"><span class="lab">Border style</span><div class="combo long"><i class="line"></i><span>Solid Line</span><svg class="cap"><use href="#ud"/></svg></div></div>
              <div class="row r3"><span class="lab">Join style</span><div class="combo long"><svg class="bev" viewBox="0 0 10 10"><path d="M.7 6L5 2l4.300 4M1 9.500l4-4 4 4" fill="none" stroke="#253943" stroke-width="2.400"/><path d="M.9 6L5 2l4.100 4M1.200 9.300L5 5.700l3.800 3.600" fill="none" stroke="#7a9aa8" stroke-width=".7"/></svg><span>Bevel</span><svg class="cap"><use href="#ud"/></svg></div></div>
              <div class="row r3"><span class="lab">Border width</span><div class="in half bw">0.500000</div><svg class="spin"><use href="#ud"/></svg><div class="ddbox"><svg class="dd"><use href="#dd"/></svg></div><div class="combo mm"><span>Millimeter</span></div></div>
              <div class="row r3"><span class="lab">Offset X,Y</span><div class="in half off1">0.000000</div><svg class="spin"><use href="#ud"/></svg><div class="in half off2">0.000000</div><svg class="spin"><use href="#ud"/></svg><div class="combo mm m2"><span>Millimeter</span></div></div>
              <div class="row r4"><span class="cb"></span><span>Draw effects</span></div>
            </div>
          </div>
          <div class="lr"><svg viewBox="0 0 8 8"><path d="M0 1.500h8L4 7z" fill="#333"/></svg><b>Layer rendering</b></div>
          <div class="group">
            <div class="g1"><span>Layer transparency</span><div class="slider"><i></i></div><div class="in zero">0</div></div>
            <div class="g2"><span>Layer blending mode</span><div class="combo nm"><span>Normal</span><svg class="cap"><use href="#ud"/></svg></div><span class="fb">Feature blending mode</span><div class="combo nm2"><span>Normal</span></div></div>
            <div class="g3"><span class="cb"></span><span>Draw effects</span><div class="fx">★</div></div>
          </div>
        </div>
        <div class="vbar"><i></i></div>
      </div>
      <div class="hbar"><i></i></div>
      <div class="buttons"><div class="btn b1">Help</div><div class="btn b2">Style <small>▾</small></div><div class="btn b3">Apply</div><div class="btn b4">Cancel</div><div class="btn ok">OK</div></div>
    </div>
  </div>
</div>
</body>
</html>
```

FILE: styles.css
```css
* { box-sizing: border-box; }
body { margin: 0; width: 720px; height: 540px; overflow: hidden; position: relative; background: #111; font: 7.75px/10px "Liberation Sans", Arial, sans-serif; color: #111; -webkit-text-stroke: .15px currentColor; display: flex; flex-direction: column; }
svg { display: block; flex: none; overflow: visible; }
svg text { -webkit-text-stroke: 0; }
.defs { display: none; }
i { display: block; flex: none; font-style: normal; }
span { white-space: nowrap; }

.menubar { height: 14px; flex: none; background: #e6eff9; border-bottom: 1px solid #4c5a68; display: grid; grid-template-columns: 21px 32px 38px 26px 30px 32px 43px 40px 37px 36px 48px 28px 54px 42px 115px 18px 16px 23px 14px 15px; align-items: center; padding-left: 12px; font: 8.7px/13px Roboto, sans-serif; color: #1c1c1c; }
.menubar svg { width: 10px; height: 10px; }
.menubar .apple { width: 9px; }
.menubar .wifi { width: 12px; }
.wintitle { height: 13px; flex: none; background: #f5f5f5; border-bottom: 1px solid #d3d3d3; display: flex; align-items: center; color: #999; font: 8.7px/12px Roboto, sans-serif; }
.dots { display: flex; gap: 5px; padding-left: 5px; width: 399px; }
.dots i { width: 7px; height: 7px; border-radius: 50%; background: #d6d6d6; border: .5px solid #c5c5c5; }

.tb { display: grid; flex: none; align-items: center; padding-left: 4px; background: linear-gradient(#e2e2e2, #bebebe); border-bottom: 1px solid #b0b0b0; overflow: hidden; }
.tb svg { width: 16px; height: 16px; }
.tb .s { width: 4px; }
.tb .a, .side .a { width: 6px; }
.dim { opacity: .5; }
.dim2 { opacity: .7; }
.flip { transform: scaleX(-1); }
.tb .pressed { background: #999; outline: 2px solid #999; }
.tb1 { height: 22px; grid-template-columns: 5px 23px 23px 23px 23px 23px 23px 5px 22px 23px 23px 23px 24px 21px 24px 22px 24px 22px 22px 5px 27px 16px 15px 15px 11px 23px 22px 23px 22px 27px 16px 10px 24px 22px 28px 12px; }
.tb2 { height: 22px; grid-template-columns: 5px 13px 10px 23px 23px 27px 15px 11px 23px 22px 23px 22px 24px 22px 6px 22px 24px 22px 23px 23px 23px 22px 6px 23px 22px 6px 23px 26px 16px 10px 23px 23px 5px 23px 23px 23px 24px 12px; }
.tb3 { height: 22px; grid-template-columns: 5px 23px 23px 23px 23px 23px 23px 22px 23px 23px 22px 23px 23px 23px 23px 22px 23px 23px 6px 23px 22px 16px; }

.work { height: 420px; flex: none; display: flex; }
.side { width: 29px; background: linear-gradient(90deg, #e9e9e9, #bababa); border-right: 1px solid #8e8e8e; padding: 3px 0 0 6px; display: grid; align-content: start; grid-template-rows: 5px 22px 23px 24px 22px 23px 23px 22px 24px 23px 23px 22px 4px 23px 23px 16px; }
.side > svg, .pair svg { width: 16px; height: 16px; }
.side .pair .a { width: 6px; }
.pair { display: flex; }
.hs { width: 20px; height: 3px; border-top: 1px dotted #fff; border-bottom: 1px dotted #f4f4f4; }
.layers { width: 220px; background: #fff; border-right: 1px solid #777; }
.lhead { height: 15px; background: #dcdcdc; display: flex; gap: 3px; padding: 2px 0 0 1px; }
.lhead svg { width: 9px; height: 9px; }
.ltools { height: 17px; background: linear-gradient(#e3e3e3, #c4c4c4); border-top: 1px solid #aaa; border-bottom: 1px solid #aaa; display: flex; gap: 7px; padding: 2px 0 0 3px; }
.ltools svg { width: 11px; height: 12px; }
.lrow { height: 12px; display: flex; align-items: center; padding-left: 16px; }
.lrow.sel { background: #c9c9c9; margin-top: 5px; height: 13px; border-top: 1px solid #aaa; }
.lrow .cb { margin-right: 8px; }
.sw { width: 10px; height: 10px; background: #8b53a0; margin-right: 4px; }
.cb { display: block; width: 8px; height: 8px; background: #fff; border: .5px solid #b7b7b7; border-radius: 1.5px; position: relative; flex: none; }
.cb.on::after { content: ""; position: absolute; left: 2px; top: .5px; width: 2.5px; height: 4.500px; border: solid #777; border-width: 0 1px 1px 0; transform: rotate(40deg); }
.cb.faint { background: #ececec; }
.cb.faint::after { border-color: #ccc; }
.map { width: 471px; background: #a5c4c4; }
.map svg { width: 471px; height: 420px; overflow: hidden; }

.status { height: 24px; flex: none; background: #e7e7e7; border-top: 1px solid #b5b5b5; display: flex; align-items: center; padding: 0 0 1px 240px; overflow: hidden; border-radius: 0 0 0 3px; }
.sicon { width: 13px; height: 15px; border: 1px solid #bbb; padding: 1px 0; margin-right: 5px; }
.sicon svg { width: 11px; height: 11px; }
.status > span:not(.cb) { flex: none; }
.c1 { width: 46px; } .c2 { width: 27px; } .c3 { width: 37px; }
.in { height: 12px; flex: none; background: #fff; border: 1px solid #bdbdbd; line-height: 10px; padding-left: 1px; white-space: nowrap; }
.in.half { background: linear-gradient(90deg, #fff var(--fill), #e3e3e3 var(--fill)); }
.coord { width: 180px; text-align: center; margin-right: 6px; }
.scale { width: 60px; border-right: 0; }
.drop { width: 11px; height: 12px; background: #cacaca; margin-right: 5px; }
.drop svg { width: 10px; height: 12px; }
.rotv { width: 53px; --fill: 50%; margin-right: 3px; }
.spin { width: 7.500px; height: 13px; border: .5px solid #b5b5b5; border-radius: 4px; background: #fff; color: #333; }
.c4 { margin: 0 3px 0 4.500px; }
.desk { height: 3px; background: #0d1512; flex: none; }

.dialog { position: absolute; left: 86px; top: 88px; width: 582px; height: 346px; border-radius: 3px; overflow: hidden; background: #e7e7e7; box-shadow: 0 12px 24px 2px rgba(0, 0, 0, .62), 0 0 1px #666; }
.dtitle { height: 13px; background: linear-gradient(#e8e8e8, #cdcdcd); border-bottom: 1px solid #b5b5b5; display: flex; align-items: center; font: 8.4px/12px Roboto, sans-serif; color: #444; padding-top: 1px; }
.dtitle svg { width: 8px; height: 9px; margin-right: 3px; }
.lights { display: flex; gap: 4.500px; width: 218px; padding-left: 4.500px; }
.lights i { width: 8px; height: 8px; border-radius: 50%; background: #c6c6c6; }
.lights .r { background: #f4514d; }
.lights .gr { background: #32b741; }
.dbody { display: flex; height: 333px; }
.tabs { width: 90px; margin: 0; padding: .5px 0 0; list-style: none; background: #4a4a4a; color: #f4f4f4; }
.tabs li { height: 21.600px; display: flex; align-items: center; padding-left: 4px; gap: 4px; }
.tabs li svg { width: 15px; height: 15px; }
.tabs .cur { background: #e9e9e9; color: #111; padding-left: 6px; gap: 6.500px; }
.pane { width: 492px; display: flex; flex-direction: column; }
.scroll { display: flex; height: 297px; }
.content { width: 481px; overflow: hidden; padding: 3px 0 0 8px; }
.combo { height: 12.500px; flex: none; background: #fff; border: .5px solid #c5c5c5; border-bottom-color: #999; border-radius: 2.500px; display: flex; align-items: center; padding-left: 5px; overflow: hidden; white-space: nowrap; }
.combo > span { margin-top: -1px; }
.cap { width: 10px; height: 13px; margin-left: auto; background: linear-gradient(#5fa8fb, #1263f2); color: #fff; }
.renderer { width: 95px; margin-left: 1px; }
.renderer .ic { width: 8px; height: 9px; margin: 0 2.500px 0 1px; }
.cols { display: flex; height: 203px; margin-top: 5.500px; }
.left { width: 174px; padding-top: 3px; }
.preview { height: 60px; border: 1px solid #b9b9b9; display: flex; align-items: center; justify-content: center; }
.preview i { width: 37px; height: 37px; border: 1.500px solid #333; }
.tree { height: 104px; margin-top: 6px; border: 1px solid #b9b9b9; background: #fff; }
.root { height: 18.500px; display: flex; align-items: center; padding-left: 3px; }
.root svg { width: 7px; height: 7px; margin-right: 5px; }
.root i { width: 10px; height: 10px; border: 1px solid #555; margin-right: 3.500px; }
.leaf { height: 19px; background: #0330cf; color: #fff; display: flex; align-items: center; padding-left: 27px; }
.leaf i { width: 10px; height: 10px; border: 1px solid #0b2fba; margin-right: 3px; }
.tools { display: flex; gap: 4.500px; margin: 10px 0 0 3.500px; }
.btn { height: 12.500px; width: 22px; flex: none; background: #fff; border: .5px solid #bbb; border-bottom-color: #999; border-radius: 2.500px; display: flex; align-items: center; justify-content: center; line-height: 10px; padding-bottom: 1px; white-space: nowrap; }
.btn svg { width: 9px; height: 9px; }
.btn.off { background: #f0f0f0; border-color: #cfcfcf; }
.btn.save { width: 34.500px; }
.form { width: 299px; }
.row { height: 20px; display: flex; align-items: center; padding-left: 16px; margin-top: 5px; }
.row.r0 { padding-left: 8.500px; margin-top: 0; }
.row.r1 { margin-top: 6px; }
.row.r2 { margin-top: 4px; }
.lab { width: 50.500px; flex: none; }
.lab.wide { width: 160px; }
.cut { width: 150px; }
.fl { width: 13px; flex: none; margin-left: -1px; }
.color { width: 73px; height: 16px; flex: none; border: 1px solid #b0b0b0; background: #ececec; display: flex; align-items: center; padding-left: 2px; margin-right: 5px; }
.swt { width: 60px; height: 11px; border-radius: 1.500px; }
.blk { background: #000; }
.color em { font: 7px/8px "DejaVu Sans"; border-left: 1px solid #b0b0b0; margin-left: 1px; height: 14px; padding-top: 7px; width: 8px; }
.dd { width: 15px; height: 13px; }
.bl { width: 26px; flex: none; margin-left: 5px; }
.long { width: 230.500px; }
.solid { width: 19px; height: 9.500px; background: #555; margin-right: 2px; }
.line { width: 19px; height: 1.500px; background: #222; margin-right: 2px; }
.bev { width: 10px; height: 9px; margin-right: 1.500px; }
.bw { width: 147px; --fill: 82%; margin-right: 2px; }
.ddbox { width: 18px; height: 15px; border: 1px solid #b4cbec; margin: 0 7px 0 6.500px; padding-left: 1px; flex: none; }
.mm { width: 80px; }
.off1 { width: 77px; --fill: 66%; margin-right: 2.500px; }
.off2 { width: 77px; --fill: 66%; margin: 0 2px 0 6.500px; }
.m2 { margin-left: 7.500px; }
.row.r4 { margin-top: 9px; padding-left: 9.500px; gap: 3px; }
.lr { height: 14px; display: flex; align-items: center; gap: 5px; padding: 1.500px 0 0 1px; margin-top: -.5px; }
.lr svg { width: 7px; height: 7px; }
.group { width: 500px; height: 100px; border: 1px solid #bcbcbc; border-radius: 3px; background: #dedede; padding-left: 6.500px; }
.g1 { height: 20px; margin-top: 6px; display: flex; align-items: center; }
.g1 > span, .g2 > span:first-child { width: 123.500px; flex: none; }
.slider { width: 329px; height: 2px; background: #a6a6a6; margin-right: 7px; flex: none; }
.slider i { width: 10px; height: 10px; border-radius: 50%; background: #fff; border: .5px solid #aaa; margin: -4px 0 0 1px; }
.zero { width: 30px; }
.g2 { height: 20px; margin-top: 2.500px; display: flex; align-items: center; }
.nm { width: 119px; padding-left: 4px; margin-right: 6px; }
.fb { width: 123.500px; flex: none; }
.nm2 { width: 100px; padding-left: 4px; }
.g3 { height: 12px; display: flex; align-items: center; padding-left: 2px; gap: 2.500px; }
.fx { width: 16px; height: 7px; border: 1px solid #c5c5c5; color: #dfd583; font-size: 5px; line-height: 5px; text-align: center; margin-left: 169px; }
.vbar { width: 11px; background: #f3f3f3; padding: 3px 0 0 2px; border-right: 2px solid #e7e7e7; }
.vbar i { width: 5px; height: 275px; border-radius: 3px; background: #aaa; }
.hbar { height: 9px; margin: 0 2px 0 5px; background: #f5f5f5; padding-top: 2.500px; }
.hbar i { width: 440px; height: 4.500px; border-radius: 3px; background: #aaa; }
.buttons { height: 27px; display: flex; align-items: center; padding: 2px 0 0 8px; }
.b1 { width: 34px; margin-right: 8.500px; }
.b2 { width: 42.500px; margin-right: 8.500px; }
.b2 small { font: 7px/8px "DejaVu Sans"; margin-left: 1px; }
.b3 { width: 37.500px; }
.b4 { width: 41.500px; margin-left: auto; margin-right: 8.500px; }
.ok { width: 41.500px; margin-right: 5.500px; background: linear-gradient(#63acfd, #0a64fb); border-color: #2a6ddd; }
```
